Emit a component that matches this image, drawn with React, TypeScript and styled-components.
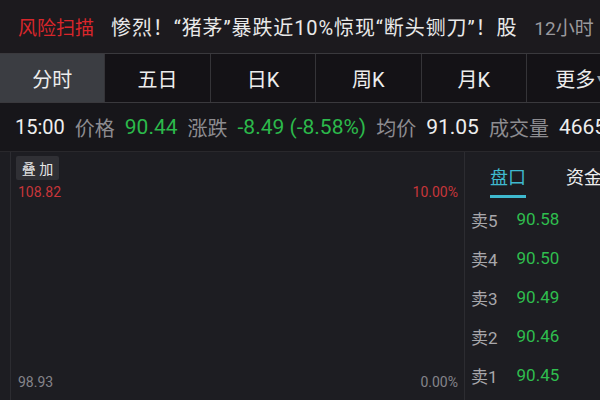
import React from 'react'
import styled, { createGlobalStyle } from 'styled-components'

const GlobalStyle = createGlobalStyle`
  html, body {
    margin: 0;
    padding: 0;
    background: #1b1a1f;
  }
  body {
    font-family: Roboto, "Noto Sans CJK SC", sans-serif;
  }
`

const tabs = ['分时', '五日', '日K', '周K', '月K', '更多']

const asks = [
  { label: '卖5', price: '90.58' },
  { label: '卖4', price: '90.50' },
  { label: '卖3', price: '90.49' },
  { label: '卖2', price: '90.46' },
  { label: '卖1', price: '90.45' },
]

const App = () => {
  return (
    <Screen>
      <GlobalStyle />
      <NewsBar>
        <NewsTag>风险扫描</NewsTag>
        <NewsTitle>惨烈！“猪茅”暴跌近10%惊现“断头铡刀”！股</NewsTitle>
        <NewsTime>12小时</NewsTime>
      </NewsBar>

      <TabBar>
        {tabs.map((t, i) => (
          <Tab key={t} $active={i === 0}>
            {t}
            {t === '更多' && <Caret>▾</Caret>}
          </Tab>
        ))}
      </TabBar>

      <Quote>
        <Time>15:00</Time>
        <Label>价格</Label>
        <Value $tone="down">90.44</Value>
        <Label>涨跌</Label>
        <Value $tone="down">-8.49 (-8.58%)</Value>
        <Label>均价</Label>
        <Value>91.05</Value>
        <Label>成交量</Label>
        <Value>4665</Value>
      </Quote>

      <Body>
        <Chart>
          <ChartTop>
            <OverlayBtn>叠 加</OverlayBtn>
            <ScaleRow>
              <Scale $tone="up">108.82</Scale>
              <Scale $tone="up">10.00%</Scale>
            </ScaleRow>
          </ChartTop>
          <ScaleRow>
            <Scale>98.93</Scale>
            <Scale>0.00%</Scale>
          </ScaleRow>
        </Chart>

        <Book>
          <BookTabs>
            <BookTab $active>盘口</BookTab>
            <BookTab>资金</BookTab>
          </BookTabs>
          <AskList>
            {asks.map((a) => (
              <AskRow key={a.label}>
                <AskLabel>{a.label}</AskLabel>
                <AskPrice>{a.price}</AskPrice>
              </AskRow>
            ))}
          </AskList>
        </Book>
      </Body>
    </Screen>
  )
}

const Screen = styled.div`
  width: 600px;
  height: 400px;
  overflow: hidden;
  background: #1b1a1f;
  display: flex;
  flex-direction: column;
`

const NewsBar = styled.div`
  height: 53px;
  display: flex;
  align-items: center;
  padding-left: 18px;
  gap: 17px;
  font-size: 19px;
  white-space: nowrap;
  background: #1c1a1e;
`

const NewsTag = styled.span`
  color: #d8262b;
`

const NewsTitle = styled.span`
  color: #e9e9e9;
  font-size: 20px;
  letter-spacing: 0.9px;
`

const NewsTime = styled.span`
  color: #9a999d;
`

const TabBar = styled.div`
  height: 48px;
  display: grid;
  grid-template-columns: repeat(6, 105.4px);
  border-top: 1px solid #3a393d;
  border-bottom: 1px solid #3a393d;
  background: #141216;
  overflow: hidden;
`

const Tab = styled.div<{ $active?: boolean }>`
  display: flex;
  align-items: center;
  justify-content: center;
  font-size: 20px;
  color: #ededed;
  background: ${(p) => (p.$active ? '#3b3d42' : '#141216')};
  border-right: 1px solid #353438;
  white-space: nowrap;
`

const Caret = styled.span`
  font-size: 12px;
  color: #9a9a9a;
  margin-left: 2px;
`

const Quote = styled.div`
  height: 48px;
  display: flex;
  align-items: center;
  gap: 10px;
  padding-left: 15px;
  font-size: 20px;
  white-space: nowrap;
  background: #17161a;
`

const Time = styled.span`
  color: #eeeeee;
`

const Label = styled.span`
  color: #8d8c90;
`

const Value = styled.span<{ $tone?: 'down' }>`
  font-size: 21px;
  color: ${(p) => (p.$tone === 'down' ? '#2cb94b' : '#eeeeee')};
`

const Body = styled.div`
  flex: 1;
  display: flex;
  border-top: 1px solid #29282c;
  background: #1d1d22;
`

const Chart = styled.div`
  width: 455px;
  margin-left: 10px;
  border-left: 1px solid #2c2c31;
  border-right: 1px solid #2c2c31;
  display: flex;
  flex-direction: column;
  justify-content: space-between;
  padding: 4px 5px 10px 5px;
  box-sizing: border-box;
`

const ChartTop = styled.div`
  display: flex;
  flex-direction: column;
  gap: 4px;
`

const OverlayBtn = styled.div`
  align-self: flex-start;
  width: 43px;
  height: 24px;
  display: flex;
  align-items: center;
  justify-content: center;
  background: #303035;
  color: #e6e6e6;
  font-size: 14px;
  border-radius: 2px;
`

const ScaleRow = styled.div`
  display: flex;
  justify-content: space-between;
  padding: 0 1px 0 2px;
`

const Scale = styled.span<{ $tone?: 'up' }>`
  font-size: 14px;
  color: ${(p) => (p.$tone === 'up' ? '#c7363a' : '#85848a')};
`

const Book = styled.div`
  flex: 1;
  display: flex;
  flex-direction: column;
  padding-left: 6px;
  overflow: hidden;
`

const BookTabs = styled.div`
  display: flex;
  gap: 40px;
  padding: 11px 0 0 19px;
  white-space: nowrap;
`

const BookTab = styled.div<{ $active?: boolean }>`
  font-size: 18px;
  padding-bottom: 6px;
  color: ${(p) => (p.$active ? '#3fb9cf' : '#eeeeee')};
  border-bottom: 3px solid ${(p) => (p.$active ? '#3fb9cf' : 'transparent')};
`

const AskList = styled.div`
  display: flex;
  flex-direction: column;
  gap: 15px;
  margin-top: 9px;
`

const AskRow = styled.div`
  display: flex;
  align-items: center;
  gap: 19px;
  height: 24px;
  font-size: 17px;
`

const AskLabel = styled.span`
  color: #a8a7ab;
`

const AskPrice = styled.span`
  color: #2fbe4e;
`

export default App
